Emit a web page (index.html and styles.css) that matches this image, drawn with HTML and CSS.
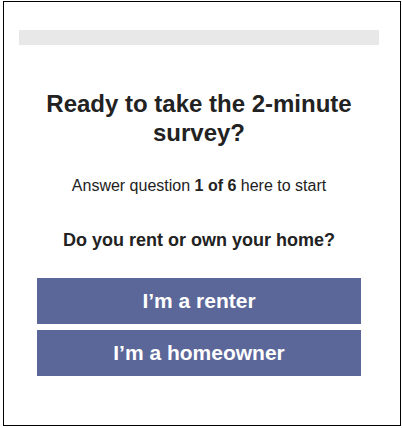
FILE: index.html
```html
<!DOCTYPE html>
<html lang="en">
<head>
  <meta charset="UTF-8">
  <meta name="viewport" content="width=device-width, initial-scale=1.0">
  <title>Survey</title>
  <link rel="stylesheet" href="styles.css">
</head>
<body>

  <div class="frame">
    <div class="progress"></div>

    <h1 class="title">Ready to take the 2-minute survey?</h1>

    <p class="intro">Answer question <b>1 of 6</b> here to start</p>

    <p class="question">Do you rent or own your home?</p>

    <div class="answers">
      <button class="answer-btn">I’m a renter</button>
      <button class="answer-btn">I’m a homeowner</button>
    </div>
  </div>

</body>
</html>
```

FILE: styles.css
```css
body {
  font-family: "Liberation Sans", Arial, sans-serif;
  background-color: #fff;
  color: #222;
  margin: 0;
  padding: 1px 0 0 3px;
}

.frame {
  width: 398px;
  height: 425px;
  border: 1px solid #000;
  padding: 28px 21px 0 15px;
  box-sizing: border-box;
}

.progress {
  height: 15px;
  background-color: #e8e8e8;
}

.title {
  font-size: 24px;
  line-height: 29px;
  font-weight: bold;
  text-align: center;
  margin: 44px 20px 0;
}

.intro {
  font-size: 16px;
  line-height: 18px;
  text-align: center;
  margin: 30px 0 0;
}

.question {
  font-size: 18px;
  line-height: 20px;
  font-weight: bold;
  text-align: center;
  margin: 35px 0 0;
}

/* answer buttons */
.answers {
  display: flex;
  flex-direction: column;
  gap: 6px;
  margin: 28px 18px 0;
}

.answer-btn {
  font-family: inherit;
  font-size: 21px;
  font-weight: bold;
  color: #fff;
  background-color: #5b6699;
  border: none;
  height: 46px;
  padding: 0;
  cursor: pointer;
}
```
